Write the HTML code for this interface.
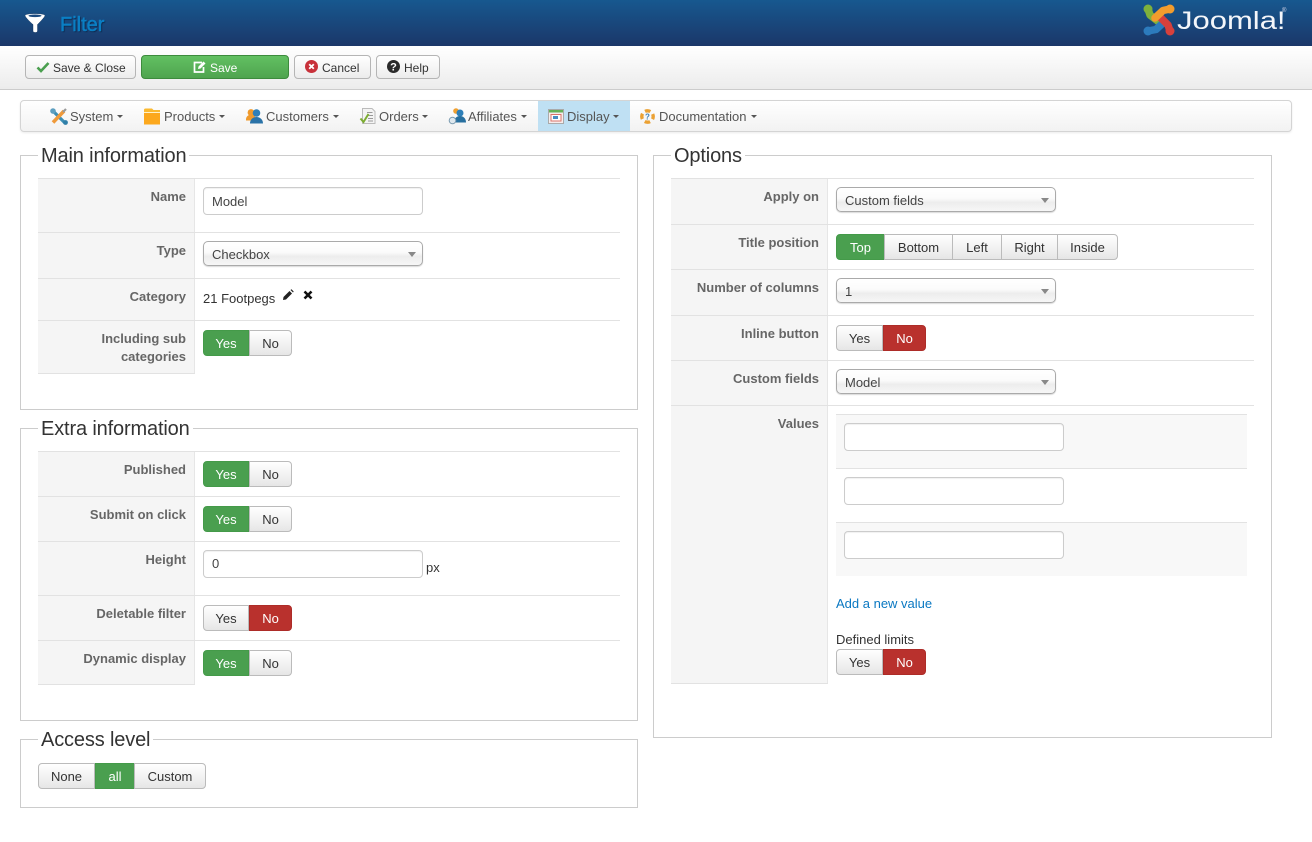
<!DOCTYPE html>
<html><head><meta charset="utf-8"><title>Filter</title>
<style>
html,body{margin:0;padding:0;background:#fff}
body{width:1312px;height:842px;position:relative;overflow:hidden;font-family:"Liberation Sans",Arial,sans-serif;font-size:13px;color:#333}
div,span,a{position:absolute;white-space:nowrap;box-sizing:border-box}
svg{position:absolute;overflow:visible}
.fs{border:1px solid #ccc}
.lg{font-size:20px;line-height:24px;color:#333;background:#fff;padding:0 3px;height:24px;letter-spacing:-.15px}
.hl{height:1px;background:#e2e2e2}
.lab{background:#f5f5f5;border-right:1px solid #e6e6e6}
.l{font-weight:bold;color:#666;text-align:right;line-height:18px;font-size:13px}
.in{background:#fff;border:1px solid #ccc;border-radius:4px;box-shadow:inset 0 1px 1px rgba(0,0,0,.06);padding-left:8px;color:#444;line-height:26px;height:28px;width:220px}
.sel{background:linear-gradient(#fff,#fbfbfb 45%,#ededed 62%,#f6f6f6);border:1px solid #aaa;border-radius:5px;box-shadow:0 1px 1px rgba(0,0,0,.15);padding-left:8px;color:#444;line-height:25px;height:25px;width:220px}
.sel:after{content:"";position:absolute;right:6px;top:10px;border:4px solid transparent;border-top:5px solid #888;border-bottom:0}
.b{height:26px;line-height:25px;text-align:center;background:linear-gradient(#fff,#e6e6e6);border:1px solid #bbb;color:#333;font-size:13px}
.g{background:#4a9f4f;border-color:#449a49;color:#fff}
.r{background:#b9312d;border-color:#ad2c28;color:#fff}
.tb{top:55px;height:24px;line-height:24px;background:linear-gradient(#fff,#ececec);border:1px solid #b5b5b5;border-radius:4px;font-size:12px;color:#333}
.m{top:100px;line-height:33px;font-size:13px;color:#555}
.c{width:0;height:0;border:3px solid transparent;border-top:3px solid #555;border-bottom:0;top:115px}
</style></head><body>

<!-- header -->
<div style="left:0;top:0;width:1312px;height:46px;background:linear-gradient(#17588f,#1b3769)"></div>
<svg style="left:24px;top:12px" width="22" height="22" viewBox="0 0 22 22"><path d="M1 3.500C1 1 21 1 21 3.500C21 5 15 11 13.500 12.500V19C13.500 21 9 21 9 19V12.500C7 11 1 5 1 3.500Z" fill="#fff" stroke="#0f2f55" stroke-width=".4"/><ellipse cx="11" cy="3.800" rx="6.500" ry="1.300" fill="#1a4a80"/></svg>
<div style="left:60px;top:11px;font-size:20px;line-height:28px;color:#0a7fc4;text-shadow:1px 1px 1px #0c2647;-webkit-text-stroke:.5px #0a7fc4">Filter</div>
<svg style="left:1135px;top:0" width="50" height="40" viewBox="0 0 50 40" fill="none" stroke-linecap="round" stroke-linejoin="round">
<path d="M13 9L15 15L24 22" stroke="#7fb13c" stroke-width="7.500"/><circle cx="13" cy="9" r="4.500" fill="#7fb13c"/>
<path d="M13 31L21 29.500L29 22" stroke="#2c7bbd" stroke-width="7.500"/><circle cx="13" cy="31" r="4.500" fill="#2c7bbd"/>
<path d="M35 31L33 25L25 17" stroke="#d7403c" stroke-width="7.500"/><circle cx="35" cy="31" r="4.500" fill="#d7403c"/>
<path d="M35 9L28 10.500L20 18" stroke="#f39c2d" stroke-width="7.500"/><circle cx="35" cy="9" r="4.500" fill="#f39c2d"/>
</svg>
<div style="left:1177px;top:4px;font-size:25px;line-height:34px;color:#f4f6fa;transform:scaleX(1.24);transform-origin:0 0">Joomla!</div>
<div style="left:1282px;top:7px;font-size:6px;line-height:8px;color:#dde">®</div>

<!-- toolbar -->
<div style="left:0;top:46px;width:1312px;height:44px;background:linear-gradient(#fff,#ececec);border-bottom:1px solid #ccc"></div>
<div class="tb" style="left:25px;width:111px;padding-left:27px">Save &amp; Close</div>
<svg style="left:36px;top:61px" width="14" height="12" viewBox="0 0 14 12"><path d="M1.500 6.500L5 10L12.500 2" fill="none" stroke="#4a9f4f" stroke-width="2.600"/></svg>
<div class="tb" style="left:141px;width:148px;background:linear-gradient(#62c062,#4fa44f);border-color:#3d8b3d;color:#fff;padding-left:68px">Save</div>
<svg style="left:193px;top:61px" width="13" height="12" viewBox="0 0 13 12"><path d="M9 1.500H1.500V11H10.500V6" fill="none" stroke="#fff" stroke-width="1.700"/><path d="M5 8L5.500 5.500L10.500 .5L12.500 2.500L7.500 7.500Z" fill="#fff"/></svg>
<div class="tb" style="left:294px;width:77px;padding-left:27px">Cancel</div>
<svg style="left:305px;top:60px" width="13" height="13" viewBox="0 0 13 13"><circle cx="6.500" cy="6.500" r="6.500" fill="#c8313a"/><path d="M4.200 4.200L8.800 8.800M8.800 4.200L4.200 8.800" stroke="#fff" stroke-width="1.800"/></svg>
<div class="tb" style="left:376px;width:64px;padding-left:27px">Help</div>
<svg style="left:387px;top:60px" width="13" height="13" viewBox="0 0 13 13"><circle cx="6.500" cy="6.500" r="6.500" fill="#2a2a2a"/><text x="6.500" y="10.500" font-size="11" font-weight="bold" text-anchor="middle" fill="#fff" font-family="Liberation Sans">?</text></svg>

<!-- menu -->
<div style="left:20px;top:100px;width:1272px;height:32px;background:linear-gradient(#fff,#f2f2f2);border:1px solid #d4d4d4;border-radius:4px;box-shadow:0 1px 2px rgba(0,0,0,.08)"></div>
<div style="left:538px;top:101px;width:92px;height:30px;background:#bfe0f3"></div>
<svg style="left:50px;top:108px" width="18" height="17" viewBox="0 0 18 17" fill="none"><path d="M3 3L15 15" stroke="#3d8fb5" stroke-width="3.200"/><path d="M14 3L3 14.500" stroke="#ef9a3b" stroke-width="3.600"/><circle cx="3" cy="3" r="2.800" fill="#5d9fc0"/><circle cx="15.500" cy="14.500" r="2.400" fill="#2f7fa8"/><path d="M13 4L16 1" stroke="#999" stroke-width="2.200"/></svg>
<div class="m" style="left:70px">System</div><div class="c" style="left:117px"></div>
<svg style="left:144px;top:108px" width="16" height="17" viewBox="0 0 16 17"><path d="M0 2a1.500 1.500 0 0 1 1.500-1.500H8L9.500 2H16V16.500H0Z" fill="#fbb92f"/><rect y="5" width="16" height="11.500" fill="#fca81d"/><rect y="4" width="16" height="1" fill="#fff2c9"/></svg>
<div class="m" style="left:164px">Products</div><div class="c" style="left:219px"></div>
<svg style="left:246px;top:108px" width="17" height="16" viewBox="0 0 17 16"><circle cx="5" cy="4.500" r="3.400" fill="#f09a2c"/><path d="M0 11.500c0-3.500 3-5 5.500-5s4 1.500 4 5v1H0Z" fill="#f09a2c"/><circle cx="10.500" cy="5" r="3.800" fill="#2d7fb8"/><path d="M4 15.500c0-4.500 3.500-6.500 6.500-6.500s6.500 2 6.500 6.500Z" fill="#2a73a8"/></svg>
<div class="m" style="left:266px">Customers</div><div class="c" style="left:333px"></div>
<svg style="left:360px;top:108px" width="16" height="17" viewBox="0 0 16 17"><path d="M2.500 .5H12L15 3.500V15.500H2.500Z" fill="#f4f4f4" stroke="#bbb"/><path d="M7 4.500H12.500M7 7.500H13M8 10.500H13M8 13H13" stroke="#999"/><path d="M.5 10.500L3.500 14L8.500 6" fill="none" stroke="#7dad33" stroke-width="2"/></svg>
<div class="m" style="left:379px">Orders</div><div class="c" style="left:422px"></div>
<svg style="left:449px;top:108px" width="17" height="17" viewBox="0 0 17 17"><circle cx="7" cy="3" r="2.800" fill="#f0a030"/><circle cx="11" cy="5" r="3.500" fill="#2d7fb8"/><path d="M5 14.500c0-4.500 3-6.500 6-6.500s6 2 6 6.500Z" fill="#276f9f"/><circle cx="3.500" cy="12.500" r="3.300" fill="#dfe8ee" stroke="#7a9ab0"/></svg>
<div class="m" style="left:468px">Affiliates</div><div class="c" style="left:521px"></div>
<svg style="left:548px;top:109px" width="16" height="15" viewBox="0 0 16 15"><rect x=".5" y=".5" width="15" height="14" fill="#f6ecec" stroke="#aaa"/><rect x="1" y="1" width="14" height="2.500" fill="#66b258"/><rect x="3" y="5.500" width="10" height="6.500" fill="#fff" stroke="#d9736a"/><rect x="5" y="7" width="5" height="3" fill="#4a8dc4"/></svg>
<div class="m" style="left:567px">Display</div><div class="c" style="left:613px"></div>
<svg style="left:640px;top:109px" width="15" height="15" viewBox="0 0 15 15"><circle cx="7.500" cy="7.500" r="5.700" fill="#f7f7f7" stroke="#eba133" stroke-width="3.400" stroke-dasharray="5.500 3.450" stroke-dashoffset="2.700"/><text x="7.500" y="10.500" font-size="8" font-weight="bold" text-anchor="middle" fill="#3f7fb5" font-family="Liberation Sans">?</text></svg>
<div class="m" style="left:659px">Documentation</div><div class="c" style="left:751px"></div>

<!-- fieldsets -->
<div class="fs" style="left:20px;top:155px;width:618px;height:255px"></div>
<div class="lg" style="left:38px;top:144px">Main information</div>
<div class="fs" style="left:20px;top:428px;width:618px;height:293px"></div>
<div class="lg" style="left:38px;top:417px">Extra information</div>
<div class="fs" style="left:20px;top:739px;width:618px;height:69px"></div>
<div class="lg" style="left:38px;top:728px">Access level</div>
<div class="fs" style="left:653px;top:155px;width:619px;height:583px"></div>
<div class="lg" style="left:671px;top:144px">Options</div>

<!-- main info -->
<div class="lab" style="left:38px;top:178px;width:157px;height:196px"></div>
<div class="hl" style="left:38px;top:178px;width:582px"></div>
<div class="hl" style="left:38px;top:232px;width:582px"></div>
<div class="hl" style="left:38px;top:278px;width:582px"></div>
<div class="hl" style="left:38px;top:320px;width:582px"></div>
<div class="hl" style="left:38px;top:373px;width:157px"></div>
<div class="l" style="left:38px;width:148px;top:188px">Name</div>
<div class="in" style="left:203px;top:187px;line-height:27px">Model</div>
<div class="l" style="left:38px;width:148px;top:242px">Type</div>
<div class="sel" style="left:203px;top:241px">Checkbox</div>
<div class="l" style="left:38px;width:148px;top:288px">Category</div>
<div style="left:203px;top:290px;line-height:17px;color:#333">21 Footpegs</div>
<svg style="left:282px;top:289px" width="12" height="12" viewBox="0 0 12 12"><path d="M1 11L1.500 8L7.500 2L10 4.500L4 10.500Z" fill="#222"/><path d="M8.500 1L9.500 .3L11.700 2.500L11 3.500Z" fill="#222"/></svg>
<svg style="left:303px;top:290px" width="10" height="10" viewBox="0 0 10 10"><path d="M1.500 1.500L8.500 8.500M8.500 1.500L1.500 8.500" stroke="#111" stroke-width="2.600"/></svg>
<div class="l" style="left:38px;width:148px;top:330px">Including sub<br>categories</div>
<div class="b g" style="left:203px;top:330px;width:46px;border-radius:4px 0 0 4px">Yes</div>
<div class="b" style="left:249px;top:330px;width:43px;border-radius:0 4px 4px 0">No</div>

<!-- extra -->
<div class="lab" style="left:38px;top:451px;width:157px;height:234px"></div>
<div class="hl" style="left:38px;top:451px;width:582px"></div>
<div class="hl" style="left:38px;top:496px;width:582px"></div>
<div class="hl" style="left:38px;top:541px;width:582px"></div>
<div class="hl" style="left:38px;top:595px;width:582px"></div>
<div class="hl" style="left:38px;top:640px;width:582px"></div>
<div class="hl" style="left:38px;top:684px;width:157px"></div>
<div class="l" style="left:38px;width:148px;top:461px">Published</div>
<div class="b g" style="left:203px;top:461px;width:46px;border-radius:4px 0 0 4px">Yes</div>
<div class="b" style="left:249px;top:461px;width:43px;border-radius:0 4px 4px 0">No</div>
<div class="l" style="left:38px;width:148px;top:506px">Submit on click</div>
<div class="b g" style="left:203px;top:506px;width:46px;border-radius:4px 0 0 4px">Yes</div>
<div class="b" style="left:249px;top:506px;width:43px;border-radius:0 4px 4px 0">No</div>
<div class="l" style="left:38px;width:148px;top:551px">Height</div>
<div class="in" style="left:203px;top:550px">0</div>
<div style="left:426px;top:559px;line-height:17px;color:#333">px</div>
<div class="l" style="left:38px;width:148px;top:605px">Deletable filter</div>
<div class="b" style="left:203px;top:605px;width:46px;border-radius:4px 0 0 4px">Yes</div>
<div class="b r" style="left:249px;top:605px;width:43px;border-radius:0 4px 4px 0">No</div>
<div class="l" style="left:38px;width:148px;top:650px">Dynamic display</div>
<div class="b g" style="left:203px;top:650px;width:46px;border-radius:4px 0 0 4px">Yes</div>
<div class="b" style="left:249px;top:650px;width:43px;border-radius:0 4px 4px 0">No</div>

<!-- access -->
<div class="b" style="left:38px;top:763px;width:57px;border-radius:4px 0 0 4px">None</div>
<div class="b g" style="left:95px;top:763px;width:40px">all</div>
<div class="b" style="left:134px;top:763px;width:72px;border-radius:0 4px 4px 0">Custom</div>

<!-- options -->
<div class="lab" style="left:671px;top:178px;width:157px;height:506px"></div>
<div class="hl" style="left:671px;top:178px;width:583px"></div>
<div class="hl" style="left:671px;top:224px;width:583px"></div>
<div class="hl" style="left:671px;top:269px;width:583px"></div>
<div class="hl" style="left:671px;top:315px;width:583px"></div>
<div class="hl" style="left:671px;top:360px;width:583px"></div>
<div class="hl" style="left:671px;top:405px;width:583px"></div>
<div class="hl" style="left:671px;top:683px;width:157px"></div>
<div class="l" style="left:671px;width:148px;top:188px">Apply on</div>
<div class="sel" style="left:836px;top:187px">Custom fields</div>
<div class="l" style="left:671px;width:148px;top:234px">Title position</div>
<div class="b g" style="left:836px;top:234px;width:49px;border-radius:4px 0 0 4px">Top</div>
<div class="b" style="left:884px;top:234px;width:69px">Bottom</div>
<div class="b" style="left:952px;top:234px;width:50px">Left</div>
<div class="b" style="left:1001px;top:234px;width:57px">Right</div>
<div class="b" style="left:1057px;top:234px;width:61px;border-radius:0 4px 4px 0">Inside</div>
<div class="l" style="left:671px;width:148px;top:279px">Number of columns</div>
<div class="sel" style="left:836px;top:278px">1</div>
<div class="l" style="left:671px;width:148px;top:325px">Inline button</div>
<div class="b" style="left:836px;top:325px;width:47px;border-radius:4px 0 0 4px">Yes</div>
<div class="b r" style="left:883px;top:325px;width:43px;border-radius:0 4px 4px 0">No</div>
<div class="l" style="left:671px;width:148px;top:370px">Custom fields</div>
<div class="sel" style="left:836px;top:369px">Model</div>
<div class="l" style="left:671px;width:148px;top:415px">Values</div>
<div style="left:836px;top:414px;width:411px;height:54px;background:#f8f8f8;border-top:1px solid #e2e2e2"></div>
<div style="left:836px;top:468px;width:411px;height:54px;background:#fff;border-top:1px solid #e2e2e2"></div>
<div style="left:836px;top:522px;width:411px;height:54px;background:#f8f8f8;border-top:1px solid #e2e2e2"></div>
<div class="in" style="left:844px;top:423px"></div>
<div class="in" style="left:844px;top:477px"></div>
<div class="in" style="left:844px;top:531px"></div>
<a style="left:836px;top:595px;line-height:17px;color:#0a78c2">Add a new value</a>
<div style="left:836px;top:631px;line-height:17px;color:#333">Defined limits</div>
<div class="b" style="left:836px;top:649px;width:47px;border-radius:4px 0 0 4px">Yes</div>
<div class="b r" style="left:883px;top:649px;width:43px;border-radius:0 4px 4px 0">No</div>
</body></html>
